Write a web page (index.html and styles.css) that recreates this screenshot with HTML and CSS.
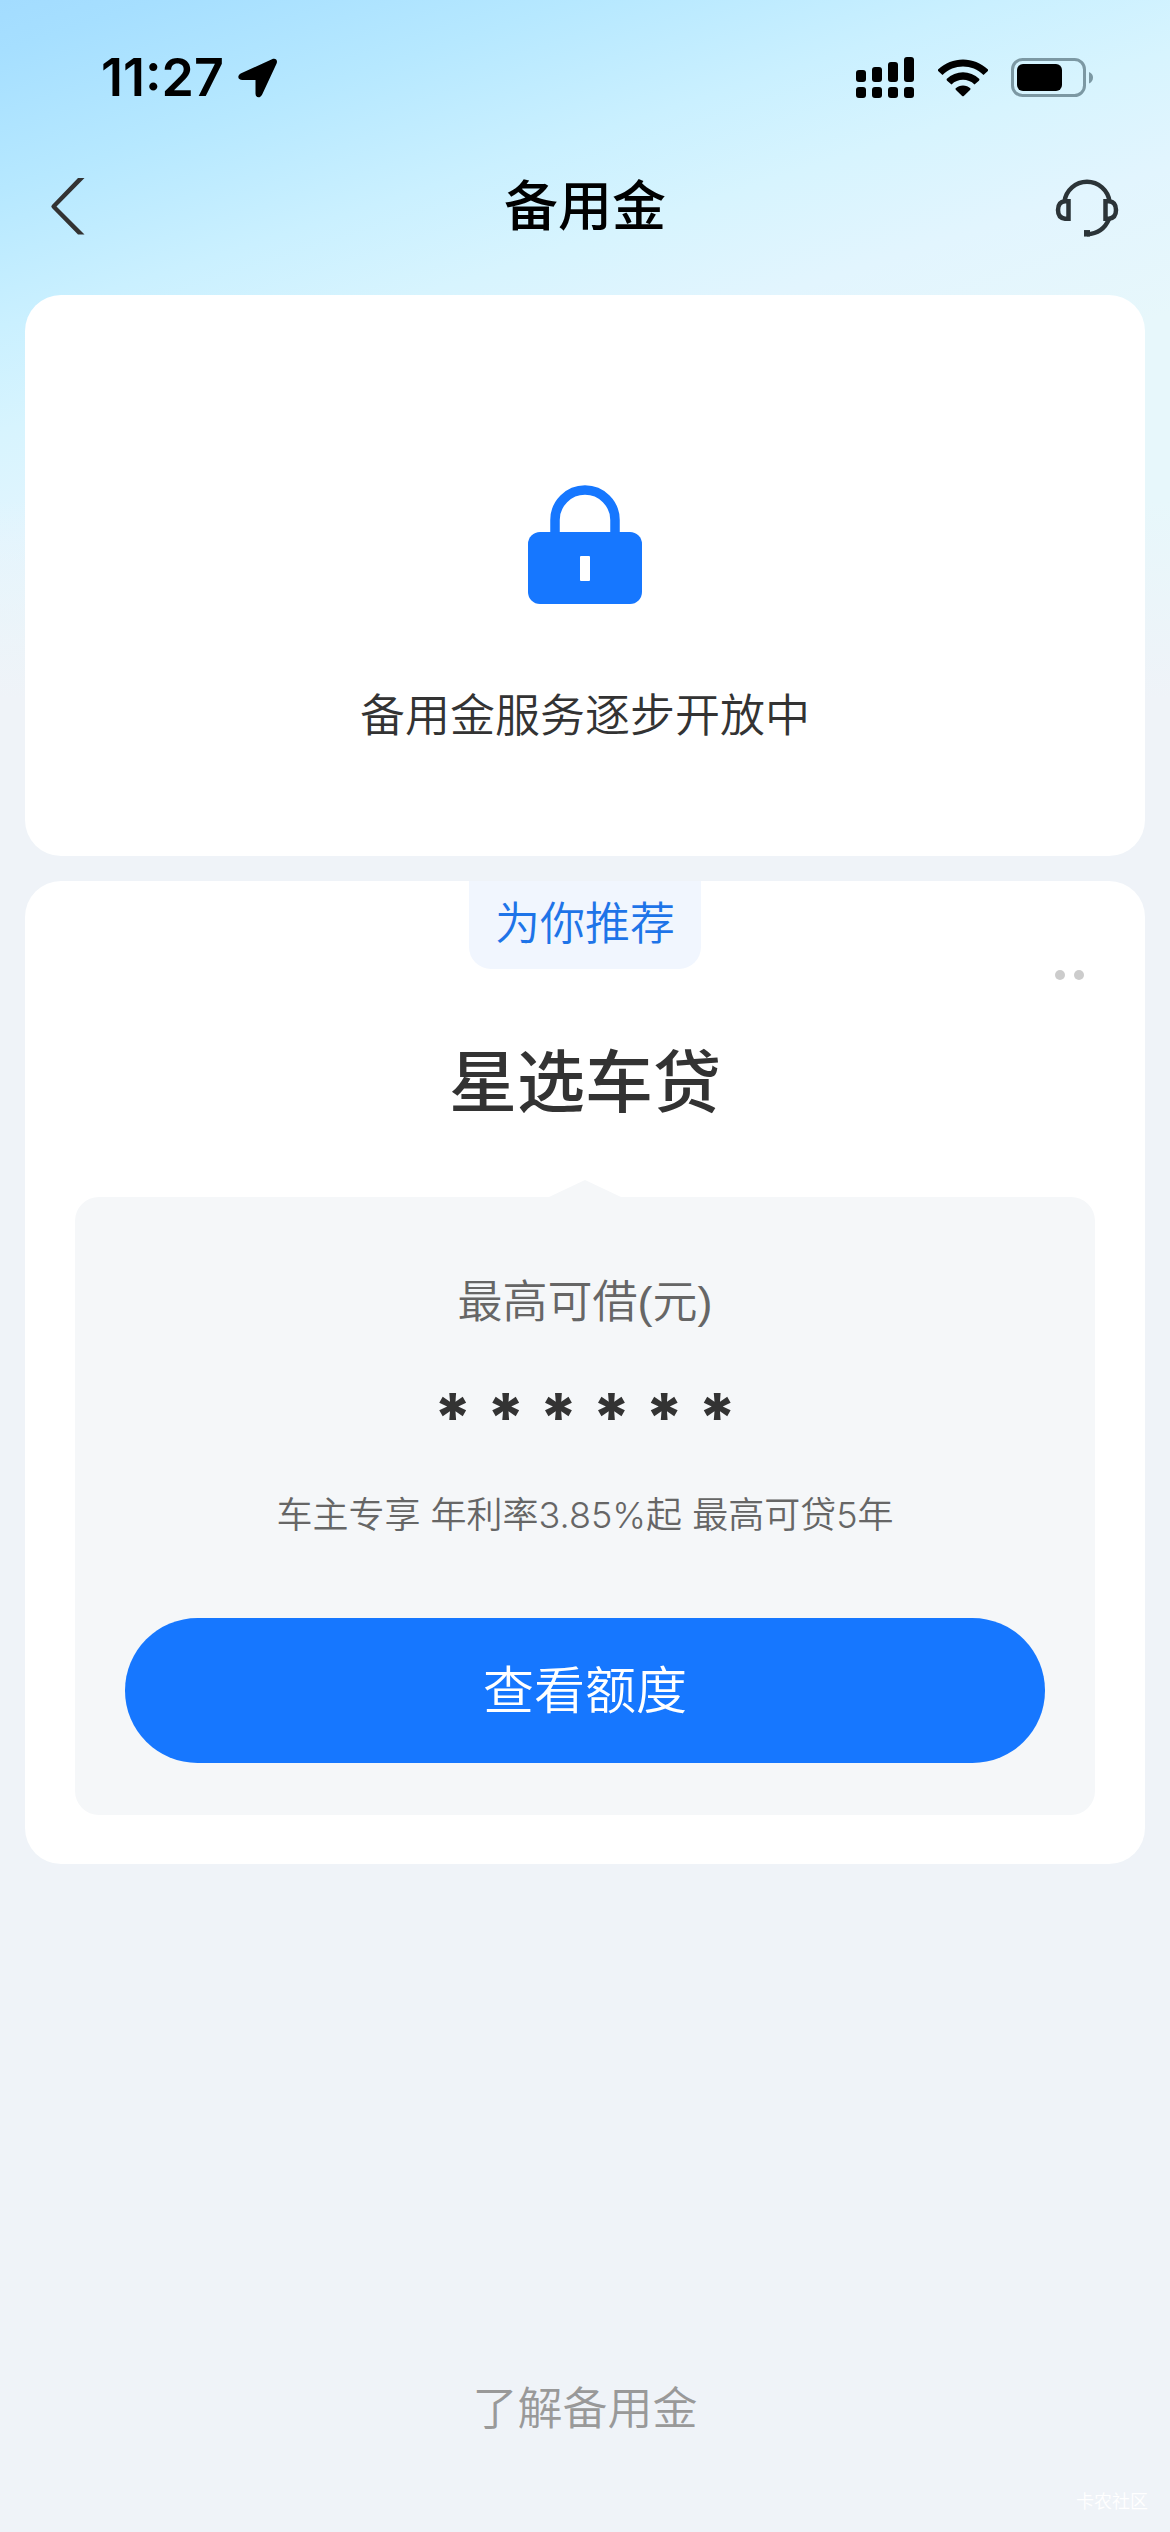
FILE: index.html
```html
<!DOCTYPE html>
<html lang="zh-CN">
<head>
<meta charset="utf-8">
<meta name="viewport" content="width=device-width, initial-scale=1">
<title>备用金</title>
<link rel="stylesheet" href="styles.css">
</head>
<body>
<div class="page">
  <div class="status-bar">
    <div class="status-left">
      <span class="clock">11:27</span>
      <svg class="location" width="40" height="40" viewBox="0 0 40 40" aria-hidden="true"><path d="M34 1.300 3.200 15.200C-1.200 17.500-.4 22 4.500 22H17.500V35.500C17.500 40.300 22.500 40.600 24.300 36.200L38.600 5.500C40 2.200 37.500-.2 34 1.300Z"/></svg>
    </div>
    <div class="status-right">
      <svg width="60" height="42" viewBox="0 0 60 42" aria-hidden="true">
        <rect x="1" y="13" width="10" height="12" rx="3"/><rect x="17" y="10" width="10" height="15" rx="3"/><rect x="33" y="5" width="10" height="20" rx="3"/><rect x="49" y="0" width="10" height="25" rx="3"/>
        <rect x="1" y="30" width="10" height="11" rx="3"/><rect x="17" y="30" width="10" height="11" rx="3"/><rect x="33" y="30" width="10" height="11" rx="3"/><rect x="49" y="30" width="10" height="11" rx="3"/>
      </svg>
      <svg width="52" height="38" viewBox="0 0 52 38" aria-hidden="true">
        <path d="M1 10.500C15-3 37-3 51 10.500Q51.300 11.500 50.600 12.300L46.500 16C35 4.800 17 4.800 5.500 16L1.400 12.300Q.7 11.500 1 10.500Z"/>
        <path d="M9.600 20C19 11 33 11 42.400 20Q42.500 21 41.900 21.700L37.500 25.500C31 19.300 21 19.300 14.500 25.500L10.100 21.700Q9.500 21 9.600 20Z"/>
        <path d="M18.500 29.500C22.500 25.500 29.500 25.500 33.500 29.500Q33.700 30.300 33 31L26.800 37Q26 37.600 25.200 37L19 31Q18.300 30.300 18.500 29.500Z"/>
      </svg>
      <svg width="84" height="40" viewBox="0 0 84 40" aria-hidden="true">
        <rect x="1.500" y="1.500" width="72" height="36" rx="10" fill="none" stroke="#7c98a3" stroke-width="3"/>
        <rect x="6" y="6" width="45" height="27" rx="6"/>
        <path d="M78 14Q82 15.500 82 19.500T78 25.500Z" fill="#7c98a3"/>
      </svg>
    </div>
  </div>

  <header class="nav">
    <button class="icon-button" type="button" aria-label="返回">
      <svg width="36" height="60" viewBox="0 0 36 60" aria-hidden="true"><path d="M28 1H34.500L6.500 29.500 34.500 57.500H28L2 31Q.5 29.500 2 28Z" fill="#333"/></svg>
    </button>
    <h1 class="nav-title">备用金</h1>
    <button class="icon-button" type="button" aria-label="客服">
      <svg width="66" height="62" viewBox="0 0 66 62" fill="none" stroke="#2b3438" stroke-width="4.500" aria-hidden="true">
        <path d="M10.500 25.500A22.700 22.700 0 0 1 55.500 25.500"/>
        <path d="M14.500 25.300H11Q4 26 4 34T11 42.700H14.500Z"/>
        <path d="M51.500 25.300H55Q62 26 62 34T55 42.700H51.500Z"/>
        <path d="M55 43Q49 57.500 33 58.300"/><path d="M30 57.300H36" stroke-width="6.500"/>
      </svg>
    </button>
  </header>

  <main class="content">
    <section class="card notice">
      <svg width="114" height="120" viewBox="0 0 114 120" aria-hidden="true">
        <path d="M27 52V35A30 30 0 0 1 87 35V52" fill="none" stroke="#1677ff" stroke-width="9.500"/>
        <rect x="0" y="47" width="114" height="72" rx="12" fill="#1677ff"/>
        <rect x="52" y="71" width="10" height="25" rx="1" fill="#fff"/>
      </svg>
      <p class="notice-text">备用金服务逐步开放中</p>
    </section>

    <section class="card offer">
      <span class="tag">为你推荐</span>
      <button class="more" type="button" aria-label="更多"><i class="dot"></i><i class="dot"></i></button>
      <h2 class="offer-title">星选车贷</h2>
      <div class="panel">
        <p class="panel-label">最高可借(元)</p>
        <p class="amount">* * * * * *</p>
        <p class="panel-note">车主专享 年利率3.85%起 最高可贷5年</p>
        <button class="primary" type="button">查看额度</button>
      </div>
    </section>
  </main>

  <footer class="footer"><a class="learn" href="#about">了解备用金</a></footer>
  <span class="watermark">卡农社区</span>
</div>
</body>
</html>
```
FILE: styles.css
```css
* {
  box-sizing: border-box;
}

body {
  margin: 0;
  background: #eff3f8;
  color: #333;
  font-family: "Liberation Sans", "Noto Sans CJK SC", sans-serif;
  font-weight: 350;
}

h1, h2, p {
  margin: 0;
}

button {
  border: 0;
  padding: 0;
  background: none;
  color: inherit;
  font: inherit;
}

svg {
  display: block;
}

.page {
  position: relative;
  display: flex;
  flex-direction: column;
  min-height: 100vh;
  background:
    linear-gradient(to bottom, rgba(239, 243, 248, 0) 500px, #eff3f8 700px),
    linear-gradient(162deg, #a3dcff 0, #a6dfff 50px, #b6e8ff 180px, #caf0ff 310px, #d7f4fe 410px, #e2f5fe 520px, #e7f7fb 660px);
}

.status-bar {
  display: flex;
  align-items: center;
  justify-content: space-between;
  height: 156px;
  padding: 0 75px 0 101px;
}

.status-left {
  display: flex;
  align-items: center;
  gap: 14px;
}

.clock {
  color: #000;
  font-family: Inter, sans-serif;
  font-size: 52px;
  font-weight: 600;
  line-height: 60px;
}

.status-right {
  display: flex;
  align-items: center;
  gap: 22px;
}

.nav {
  display: grid;
  grid-template-columns: 1fr auto 1fr;
  align-items: center;
  height: 102px;
  padding: 0 50px;
}

.nav .icon-button:last-child {
  justify-self: end;
}

.icon-button {
  justify-self: start;
}

.nav-title {
  color: #000;
  font-size: 54px;
  font-weight: 500;
  line-height: 80px;
}

.content {
  display: flex;
  flex-direction: column;
  gap: 25px;
  padding: 37px 25px 0;
}

.card {
  display: flex;
  flex-direction: column;
  align-items: center;
  border-radius: 36px;
  background: #fff;
}

.notice {
  gap: 78px;
  padding: 190px 50px 105px;
}

.notice-text {
  font-size: 45px;
  line-height: 68px;
}

.offer {
  position: relative;
  padding: 0 50px 49px;
}

.tag {
  padding: 10px 26px;
  border-radius: 0 0 22px 22px;
  background: #f1f6fe;
  color: #1e74e8;
  font-size: 45px;
  line-height: 68px;
}

.more {
  position: absolute;
  top: 84px;
  right: 56px;
  display: flex;
  gap: 9px;
  padding: 5px;
}

.dot {
  width: 10px;
  height: 10px;
  border-radius: 50%;
  background: #ccc;
}

.offer-title {
  padding: 64px 0;
  font-size: 68px;
  font-weight: 500;
  line-height: 100px;
}

.panel {
  position: relative;
  display: flex;
  flex-direction: column;
  align-items: center;
  align-self: stretch;
  padding: 72px 50px 52px;
  border-radius: 24px;
  background: #f5f7f9;
}

.panel::before {
  content: "";
  position: absolute;
  bottom: 100%;
  width: 72px;
  height: 17px;
  background: #f5f7f9;
  clip-path: polygon(50% 0, 100% 100%, 0 100%);
}

.panel-label {
  color: #666;
  font-size: 45px;
  line-height: 68px;
}

.amount {
  padding-top: 40px;
  font-family: Inter, sans-serif;
  font-size: 66px;
  font-weight: 800;
  line-height: 80px;
}

.panel-note {
  padding: 30px 0 75px;
  color: #666;
  font-family: Inter, "Noto Sans CJK SC", sans-serif;
  font-size: 36px;
  line-height: 56px;
}

.primary {
  width: 100%;
  height: 145px;
  padding-bottom: 8px;
  border-radius: 73px;
  background: #1677ff;
  color: #fff;
  font-size: 51px;
}

.footer {
  margin-top: auto;
  padding: 40px 0 88px;
  text-align: center;
}

.learn {
  color: #999;
  font-size: 45px;
  line-height: 68px;
  text-decoration: none;
}

.watermark {
  position: absolute;
  right: 22px;
  bottom: 16px;
  color: #fff;
  font-size: 18px;
  line-height: 28px;
}
```
